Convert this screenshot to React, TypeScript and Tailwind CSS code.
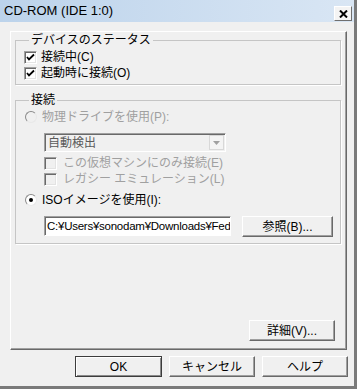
import React from 'react';

const font = { fontFamily: '"Liberation Sans", "Noto Sans CJK JP", sans-serif' };

function Check({ checked, disabled }: { checked?: boolean; disabled?: boolean }) {
  return (
    <span
      className={`w-[13px] h-[13px] shrink-0 flex items-center justify-center border border-t-[#a0a0a0] border-l-[#a0a0a0] border-b-white border-r-white shadow-[inset_1px_1px_0_#696969,inset_-1px_-1px_0_#e3e3e3] ${
        disabled ? 'bg-[#f0f0f0]' : 'bg-white'
      }`}
    >
      {checked && (
        <svg width="9" height="9" viewBox="0 0 9 9">
          <path d="M1 4 L3 6.5 L8 1.5" stroke="#000" strokeWidth="1.8" fill="none" />
        </svg>
      )}
    </span>
  );
}

function Radio({ checked, disabled }: { checked?: boolean; disabled?: boolean }) {
  return (
    <span
      className={`w-[12px] h-[12px] shrink-0 rounded-full flex items-center justify-center border border-t-[#8a8a8a] border-l-[#8a8a8a] border-b-[#e8e8e8] border-r-[#e8e8e8] ${
        disabled ? 'bg-[#f0f0f0]' : 'bg-white'
      }`}
    >
      {checked && <span className="w-[4px] h-[4px] rounded-full bg-black" />}
    </span>
  );
}

function Btn({ children, className = '', def }: { children: React.ReactNode; className?: string; def?: boolean }) {
  return (
    <div
      className={`h-[21px] flex items-center justify-center bg-[#f0f0f0] text-[12px] text-black border ${
        def
          ? 'border-[#3c3c3c] shadow-[inset_1px_1px_0_#fff,inset_-1px_-1px_0_#8a8a8a]'
          : 'border-t-white border-l-white border-b-[#696969] border-r-[#696969] shadow-[inset_-1px_-1px_0_#a0a0a0]'
      } ${className}`}
    >
      {children}
    </div>
  );
}

function Group({ label, className = '', children }: { label: string; className?: string; children: React.ReactNode }) {
  return (
    <fieldset className={`border border-[#c5c5c5] shadow-[1px_1px_0_#fff] ml-[4px] w-[326px] pl-[8px] ${className}`}>
      <legend className="ml-[5px] px-[2px] text-[12px] leading-[12px] text-black">{label}</legend>
      {children}
    </fieldset>
  );
}

export default function App() {
  return (
    <div
      style={font}
      className="w-[357px] h-[389px] bg-[#f0f0f0] flex flex-col border-r-[3px] border-b-[3px] border-r-[#7a7a7a] border-b-[#7a7a7a] text-[12px] leading-[16px] overflow-hidden"
    >
      {/* title */}
      <div className="h-[22px] shrink-0 flex items-start justify-between pl-[4px] pr-[2px] bg-gradient-to-r from-[#bcd3eb] to-[#d9e6f4]">
        <span className="text-[13px] leading-[22px] text-black">CD-ROM (IDE 1:0)</span>
        <span className="w-[18px] h-[15px] mt-[6px] flex items-center justify-center bg-[#f4f4f4] border border-t-white border-l-white border-b-[#6f6f6f] border-r-[#6f6f6f]">
          <svg width="9" height="8" viewBox="0 0 9 8">
            <path d="M1 0.5 L8 7.5 M8 0.5 L1 7.5" stroke="#000" strokeWidth="2" />
          </svg>
        </span>
      </div>

      {/* tab page */}
      <div className="ml-[10px] mt-[9px] w-[337px] h-[319px] shrink-0 flex flex-col border border-t-white border-l-white border-b-[#696969] border-r-[#696969] shadow-[inset_-1px_-1px_0_#a0a0a0]">
        <Group label="デバイスのステータス" className="mt-[2px] pt-[3px] pb-[3px]">
          <div className="h-[16px] flex items-center gap-[4px]">
            <Check checked />
            <span>接続中(C)</span>
          </div>
          <div className="h-[16px] flex items-center gap-[4px]">
            <Check checked />
            <span>起動時に接続(O)</span>
          </div>
        </Group>

        <Group label="接続" className="mt-[9px] pt-[3px] pb-[6px]">
          <div className="h-[16px] flex items-center gap-[5px] ml-[1px] text-[#a0a0a0]">
            <Radio disabled />
            <span>物理ドライブを使用(P):</span>
          </div>
          <div className="ml-[20px] mt-[8px] w-[182px] h-[19px] flex items-center justify-between bg-[#f0f0f0] border border-t-[#a0a0a0] border-l-[#a0a0a0] border-b-white border-r-white shadow-[inset_1px_1px_0_#696969]">
            <span className="pl-[3px] text-[#5a5a5a]">自動検出</span>
            <span className="w-[15px] h-[15px] mr-[1px] flex items-center justify-center bg-[#f4f4f4] border border-[#d8d8d8]">
              <svg width="7" height="4" viewBox="0 0 7 4">
                <path d="M0 0 H7 L3.5 4 Z" fill="#a0a0a0" />
              </svg>
            </span>
          </div>
          <div className="ml-[20px] mt-[3px] h-[16px] flex items-center gap-[6px] text-[#a0a0a0]">
            <Check disabled />
            <span>この仮想マシンにのみ接続(E)</span>
          </div>
          <div className="ml-[20px] h-[16px] flex items-center gap-[6px] text-[#a0a0a0]">
            <Check disabled />
            <span>レガシー エミュレーション(L)</span>
          </div>
          <div className="mt-[5px] h-[16px] flex items-center gap-[5px] ml-[1px]">
            <Radio checked />
            <span>ISOイメージを使用(I):</span>
          </div>
          <div className="ml-[20px] mt-[8px] flex items-start gap-[11px]">
            <div className="w-[187px] h-[20px] flex items-center bg-white border border-t-[#a0a0a0] border-l-[#a0a0a0] border-b-white border-r-white shadow-[inset_1px_1px_0_#696969] overflow-hidden whitespace-nowrap">
              <span className="pl-[2px] text-[11.5px] tracking-[-0.25px]">C:¥Users¥sonodam¥Downloads¥Fed</span>
            </div>
            <Btn className="w-[91px]">参照(B)...</Btn>
          </div>
        </Group>

        <div className="mt-auto mb-[8px] flex justify-end pr-[11px]">
          <Btn className="w-[86px]">詳細(V)...</Btn>
        </div>
      </div>

      {/* bottom buttons */}
      <div className="mt-[6px] flex justify-end gap-[7px] pr-[6px]">
        <Btn def className="w-[87px]">OK</Btn>
        <Btn className="w-[86px]">キャンセル</Btn>
        <Btn className="w-[86px]">ヘルプ</Btn>
      </div>
    </div>
  );
}
